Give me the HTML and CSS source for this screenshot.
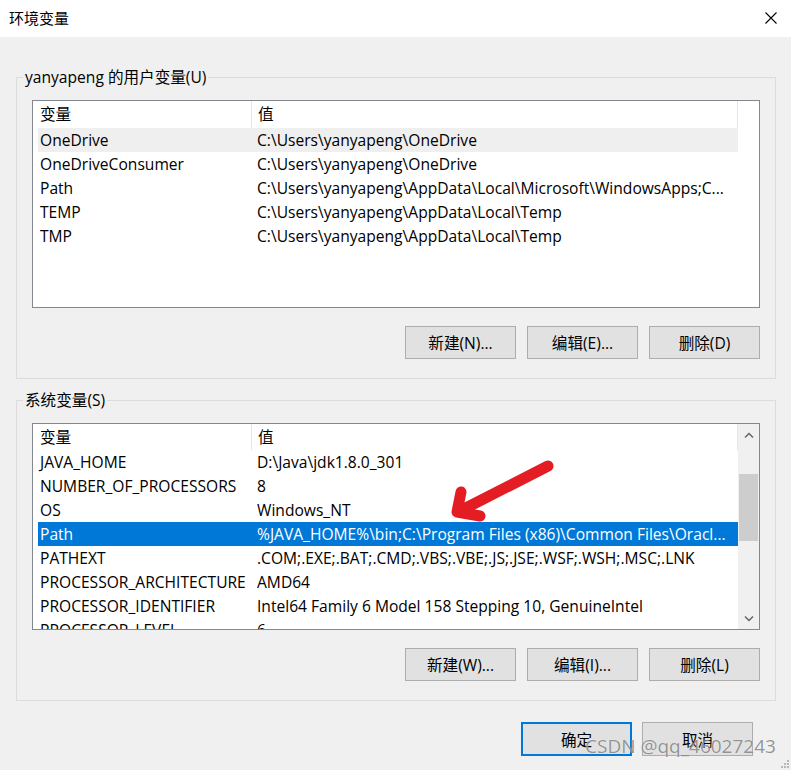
FILE: index.html
```html
<!DOCTYPE html>
<html lang="zh-CN">
<head>
  <meta charset="UTF-8" />
  <meta name="viewport" content="width=device-width, initial-scale=1.0" />
  <title>环境变量</title>
  <link rel="stylesheet" href="styles.css">
</head>
<body>
  <div class="window">
    <header class="titlebar">
      <span class="title">环境变量</span>
      <svg class="close" width="12" height="12" viewBox="0 0 12 12">
        <path d="M0.5 0.5 L11.5 11.5 M11.5 0.5 L0.5 11.5" stroke="#000" stroke-width="1.1" fill="none" />
      </svg>
    </header>

    <div class="content">
      <section class="group">
        <div class="legend">yanyapeng 的用户变量(U)</div>
        <div class="list list-user">
          <div class="list-main">
            <div class="list-head">
              <div class="head-name">变量</div>
              <div class="head-value">值</div>
            </div>
            <div class="row hover"><span class="name">OneDrive</span><span class="value">C:\Users\yanyapeng\OneDrive</span></div>
            <div class="row"><span class="name">OneDriveConsumer</span><span class="value">C:\Users\yanyapeng\OneDrive</span></div>
            <div class="row"><span class="name">Path</span><span class="value">C:\Users\yanyapeng\AppData\Local\Microsoft\WindowsApps;C...</span></div>
            <div class="row"><span class="name">TEMP</span><span class="value">C:\Users\yanyapeng\AppData\Local\Temp</span></div>
            <div class="row"><span class="name">TMP</span><span class="value">C:\Users\yanyapeng\AppData\Local\Temp</span></div>
          </div>
          <div class="gutter"></div>
        </div>
        <div class="buttons">
          <button type="button" class="btn">新建(N)...</button>
          <button type="button" class="btn">编辑(E)...</button>
          <button type="button" class="btn">删除(D)</button>
        </div>
      </section>

      <section class="group group-system">
        <div class="legend">系统变量(S)</div>
        <div class="list list-system">
          <div class="list-main">
            <div class="list-head">
              <div class="head-name">变量</div>
              <div class="head-value">值</div>
            </div>
            <div class="row"><span class="name">JAVA_HOME</span><span class="value">D:\Java\jdk1.8.0_301</span></div>
            <div class="row"><span class="name">NUMBER_OF_PROCESSORS</span><span class="value">8</span></div>
            <div class="row"><span class="name">OS</span><span class="value">Windows_NT</span></div>
            <div class="row selected"><span class="name">Path</span><span class="value">%JAVA_HOME%\bin;C:\Program Files (x86)\Common Files\Oracl...</span></div>
            <div class="row"><span class="name">PATHEXT</span><span class="value">.COM;.EXE;.BAT;.CMD;.VBS;.VBE;.JS;.JSE;.WSF;.WSH;.MSC;.LNK</span></div>
            <div class="row"><span class="name">PROCESSOR_ARCHITECTURE</span><span class="value">AMD64</span></div>
            <div class="row"><span class="name">PROCESSOR_IDENTIFIER</span><span class="value">Intel64 Family 6 Model 158 Stepping 10, GenuineIntel</span></div>
            <div class="row"><span class="name">PROCESSOR_LEVEL</span><span class="value">6</span></div>
          </div>
          <div class="scrollbar">
            <div class="scroll-btn">
              <svg width="10" height="6" viewBox="0 0 10 6"><path d="M1 5.5 L5 1.5 L9 5.5" stroke="#606060" stroke-width="1.4" fill="none" /></svg>
            </div>
            <div class="track"><div class="thumb"></div></div>
            <div class="scroll-btn">
              <svg width="10" height="6" viewBox="0 0 10 6"><path d="M1 0.5 L5 4.5 L9 0.5" stroke="#606060" stroke-width="1.4" fill="none" /></svg>
            </div>
          </div>
        </div>
        <div class="buttons">
          <button type="button" class="btn">新建(W)...</button>
          <button type="button" class="btn">编辑(I)...</button>
          <button type="button" class="btn">删除(L)</button>
        </div>
      </section>
    </div>

    <footer class="footer">
      <button type="button" class="btn btn-default">确定</button>
      <button type="button" class="btn">取消</button>
    </footer>

    <!-- 标注箭头 -->
    <svg class="arrow" width="791" height="770" viewBox="0 0 791 770">
      <path d="M548 466 L460 511 M461 492 L457 512 L480 516" stroke="#e31d23" stroke-width="11" stroke-linecap="round" stroke-linejoin="round" fill="none" />
    </svg>

    <div class="watermark">CSDN @qq_46027243</div>

    <svg class="grip" width="8" height="8" viewBox="0 0 8 8">
      <rect x="6" y="0" width="2" height="2" fill="#b8b8b8" />
      <rect x="3" y="3" width="2" height="2" fill="#b8b8b8" />
      <rect x="6" y="3" width="2" height="2" fill="#b8b8b8" />
      <rect x="0" y="6" width="2" height="2" fill="#b8b8b8" />
      <rect x="3" y="6" width="2" height="2" fill="#b8b8b8" />
      <rect x="6" y="6" width="2" height="2" fill="#b8b8b8" />
    </svg>
  </div>
</body>
</html>
```

FILE: styles.css
```css
body {
  margin: 0;
  font-family: "Open Sans", "Noto Sans CJK SC", sans-serif;
  font-size: 15.6px;
  color: #000;
  background-color: #f0f0f0;
}
.window {
  position: relative;
  width: 791px;
  height: 770px;
  overflow: hidden;
  background-color: #f0f0f0;
}
.titlebar {
  height: 37px;
  background-color: #fff;
  display: flex;
  align-items: center;
  justify-content: space-between;
  padding: 0 14px 0 9px;
}
.title {
  font-size: 15px;
  line-height: 20px;
  margin-top: -1px;
}
.close {
  display: block;
  margin-top: -1px;
}
.content {
  padding: 40px 15px 0 16px;
}
.group {
  border: 1px solid #dcdcdc;
  padding: 0 15px 19px 15px;
}
.group-system {
  margin-top: 21px;
}
.legend {
  width: fit-content;
  margin: -11px 0 0 -9px;
  padding: 0 2px;
  line-height: 21px;
  background-color: #f0f0f0;
}
.list {
  margin-top: 12px;
  height: 208px;
  box-sizing: border-box;
  border: 1px solid #828790;
  background-color: #fff;
  display: flex;
  overflow: hidden;
}
.list-system {
  height: 207px;
}
.list-main {
  flex: 1;
  min-width: 0;
}
.list-head {
  display: flex;
  height: 27px;
  line-height: 27px;
  border-right: 1px solid #e5e5e5;
}
.list-system .list-head {
  height: 26px;
  line-height: 26px;
}
.head-name {
  width: 211px;
  padding-left: 7px;
  border-right: 1px solid #e5e5e5;
}
.head-value {
  padding-left: 6px;
}
.row {
  display: flex;
  margin-left: 5px;
  height: 24px;
  line-height: 24px;
  white-space: nowrap;
}
.row .name {
  width: 217px;
  padding-left: 2px;
  flex-shrink: 0;
  overflow: hidden;
}
.row .value {
  flex: 1;
  overflow: hidden;
}
.row.hover {
  background-color: #efefef;
}
.row.selected {
  background-color: #0078d7;
  color: #fff;
}
.gutter {
  width: 21px;
}
.scrollbar {
  width: 21px;
  background-color: #f0f0f0;
  display: flex;
  flex-direction: column;
}
.scroll-btn {
  height: 21px;
  display: flex;
  align-items: center;
  justify-content: center;
}
.scroll-btn svg {
  display: block;
}
.track {
  flex: 1;
}
.thumb {
  margin: 29px 1px 0 1px;
  height: 67px;
  background-color: #cdcdcd;
}
.buttons {
  display: flex;
  justify-content: flex-end;
  gap: 11px;
  margin-top: 18px;
}
.btn {
  width: 111px;
  height: 33px;
  box-sizing: border-box;
  background-color: #e1e1e1;
  border: 1px solid #adadad;
  font-family: "Open Sans", "Noto Sans CJK SC", sans-serif;
  font-size: 15.6px;
  color: #000;
  padding: 0;
}
.footer {
  display: flex;
  justify-content: flex-end;
  gap: 10px;
  margin-top: 21px;
  padding-right: 38px;
}
.footer .btn {
  height: 34px;
}
.btn-default {
  border: 2px solid #0078d7;
}
.arrow {
  position: absolute;
  left: 0;
  top: 0;
  pointer-events: none;
}
.watermark {
  position: absolute;
  left: 585px;
  top: 733px;
  font-size: 19px;
  line-height: 26px;
  color: rgba(95, 95, 95, 0.68);
  text-shadow: 0 0 1px rgba(255, 255, 255, 0.9);
  white-space: nowrap;
}
.grip {
  position: absolute;
  right: 2px;
  bottom: 2px;
}
```
